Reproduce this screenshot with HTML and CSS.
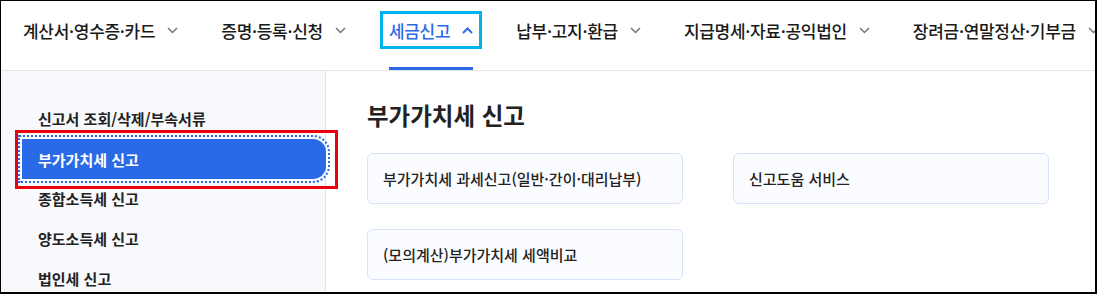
FILE: index.html
```html
<!DOCTYPE html>
<html lang="ko">

<head>
    <meta charset="UTF-8">
    <meta name="viewport" content="width=device-width, initial-scale=1.0">
    <title>세금신고</title>
    <link rel="stylesheet" href="styles.css">
</head>

<body>
    <div class="frame">
        <header class="gnb">
            <ul class="gnb-list">
                <li class="gnb-item">
                    <a class="gnb-link" href="#">계산서·영수증·카드
                        <svg class="chev" viewBox="0 0 11 7"><path d="M1 1l4.5 4.5L10 1" /></svg>
                    </a>
                </li>
                <li class="gnb-item">
                    <a class="gnb-link" href="#">증명·등록·신청
                        <svg class="chev" viewBox="0 0 11 7"><path d="M1 1l4.5 4.5L10 1" /></svg>
                    </a>
                </li>
                <li class="gnb-item active">
                    <a class="gnb-link" href="#">세금신고
                        <svg class="chev up" viewBox="0 0 11 7"><path d="M1 6l4.5-4.5L10 6" /></svg>
                    </a>
                </li>
                <li class="gnb-item">
                    <a class="gnb-link" href="#">납부·고지·환급
                        <svg class="chev" viewBox="0 0 11 7"><path d="M1 1l4.5 4.5L10 1" /></svg>
                    </a>
                </li>
                <li class="gnb-item">
                    <a class="gnb-link" href="#">지급명세·자료·공익법인
                        <svg class="chev" viewBox="0 0 11 7"><path d="M1 1l4.5 4.5L10 1" /></svg>
                    </a>
                </li>
                <li class="gnb-item">
                    <a class="gnb-link" href="#">장려금·연말정산·기부금
                        <svg class="chev" viewBox="0 0 11 7"><path d="M1 1l4.5 4.5L10 1" /></svg>
                    </a>
                </li>
            </ul>
        </header>

        <div class="body">
            <nav class="side">
                <a class="side-link" href="#">신고서 조회/삭제/부속서류</a>
                <a class="side-link active" href="#">부가가치세 신고</a>
                <a class="side-link" href="#">종합소득세 신고</a>
                <a class="side-link" href="#">양도소득세 신고</a>
                <a class="side-link" href="#">법인세 신고</a>
            </nav>

            <main class="content">
                <h2 class="title">부가가치세 신고</h2>
                <div class="cards">
                    <a class="card" href="#">부가가치세 과세신고(일반·간이·대리납부)</a>
                    <a class="card" href="#">신고도움 서비스</a>
                    <a class="card" href="#">(모의계산)부가가치세 세액비교</a>
                </div>
            </main>
        </div>
    </div>
</body>

</html>
```

FILE: styles.css
```css
* {
    box-sizing: border-box;
    margin: 0;
    padding: 0;
}

body {
    font-family: "Noto Sans CJK KR", "Noto Sans", sans-serif;
    color: #222;
    background: #fff;
}

a {
    color: inherit;
    text-decoration: none;
}

.frame {
    width: 1097px;
    height: 294px;
    border-style: solid;
    border-color: #000;
    border-width: 1px 2px 2px 1px;
    overflow: hidden;
    display: flex;
    flex-direction: column;
}

/* top menu */
.gnb {
    height: 70px;
    border-bottom: 1px solid #e6e6e6;
    flex-shrink: 0;
}

.gnb-list {
    list-style: none;
    display: flex;
    gap: 43px;
    padding-left: 22px;
    white-space: nowrap;
    height: 100%;
}

.gnb-item {
    height: 69px;
    border-bottom: 3px solid transparent;
    padding-top: 19px;
}

.gnb-item.active {
    border-bottom-color: #2b6ae6;
}

.gnb-link {
    display: flex;
    align-items: center;
    gap: 12px;
    height: 20px;
    font-size: 17px;
    font-weight: 500;
    letter-spacing: -0.3px;
    color: #1a1a1a;
}

.gnb-item.active .gnb-link {
    color: #2b6ae6;
    outline: 3px solid #00b2ef;
    outline-offset: 6px;
}

.chev {
    width: 11px;
    height: 7px;
    fill: none;
    stroke: #777;
    stroke-width: 1.5;
}

.chev.up {
    stroke: #2b6ae6;
    stroke-width: 2;
}

/* lower area */
.body {
    flex: 1;
    display: flex;
}

.side {
    width: 325px;
    flex-shrink: 0;
    background: #f7f9fd;
    border-right: 1px solid #dbe3f0;
    padding: 27px 0 0 21px;
    display: flex;
    flex-direction: column;
}

.side-link {
    position: relative;
    display: flex;
    align-items: center;
    height: 40px;
    padding-left: 16px;
    margin-right: -1px;
    font-size: 15px;
    font-weight: 600;
    color: #222;
}

.side-link.active {
    background: #2b6ae6;
    color: #fff;
    border-radius: 0 13px 13px 0;
    margin-top: 1px;
    margin-bottom: -1px;
    outline: 2px dotted #2b6ae6;
    outline-offset: 2px;
}

.side-link.active::after {
    content: "";
    position: absolute;
    top: -9px;
    left: -7px;
    right: -12px;
    bottom: -10px;
    border: 3px solid #e8000b;
}

.content {
    flex: 1;
    padding: 28px 0 0 41px;
}

.title {
    font-size: 23.5px;
    font-weight: 700;
    line-height: 33px;
    color: #222;
    margin-bottom: 21px;
}

.cards {
    display: grid;
    grid-template-columns: 316px 316px;
    column-gap: 50px;
    row-gap: 25px;
}

.card {
    display: flex;
    align-items: center;
    height: 51px;
    padding-left: 15px;
    background: #fafcff;
    border: 1px solid #d5e2fa;
    border-radius: 6px;
    font-size: 15px;
    font-weight: 500;
    color: #222;
}
```
